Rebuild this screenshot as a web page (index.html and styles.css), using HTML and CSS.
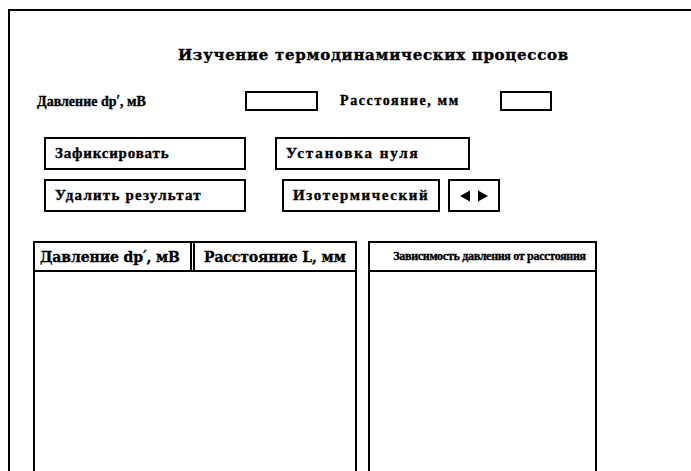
FILE: index.html
```html
<!DOCTYPE html>
<html lang="ru">
<head>
<meta charset="utf-8">
<title>Изучение термодинамических процессов</title>
<link rel="stylesheet" href="styles.css">
</head>
<body>
<div class="frame">
  <h1 class="title">Изучение термодинамических процессов</h1>

  <div class="row row-inputs">
    <span class="label label-pressure">Давление dp<span class="prime">′</span>, мВ</span>
    <span class="field field-pressure"></span>
    <span class="label label-distance">Расстояние, мм</span>
    <span class="field field-distance"></span>
  </div>

  <div class="row row-buttons">
    <button class="btn btn-fix">Зафиксировать</button>
    <button class="btn btn-zero">Установка нуля</button>
  </div>

  <div class="row row-buttons">
    <button class="btn btn-delete">Удалить результат</button>
    <button class="btn btn-mode">Изотермический</button>
    <button class="btn btn-spin" aria-label="Переключить режим">
      <svg width="30" height="12" viewBox="0 0 30 12">
        <polygon points="1,6 11,0.5 11,11.5" fill="#000"/>
        <polygon points="29,6 19,0.5 19,11.5" fill="#000"/>
      </svg>
    </button>
  </div>

  <div class="panels">
    <div class="results">
      <div class="results-head">
        <div class="th th-pressure">Давление dp<span class="prime">′</span>, мВ</div>
        <div class="th th-distance">Расстояние L, мм</div>
      </div>
    </div>
    <div class="chart">
      <div class="chart-head">Зависимость давления от расстояния</div>
    </div>
  </div>
</div>
</body>
</html>
```

FILE: styles.css
```css
html, body {
  margin: 0;
  padding: 0;
  overflow: hidden;
  background: #fff;
  color: #000;
}

body {
  font-family: "Liberation Serif", "Times New Roman", serif;
  font-weight: bold;
  -webkit-text-stroke: 0.35px #000;
}

/* outer window frame: only top and left edges fall inside the view */
.frame {
  margin: 9px 0 0 8px;
  border-left: 2px solid #000;
  border-top: 2px solid #000;
  height: 520px;
  display: flex;
  flex-direction: column;
}

.title {
  margin: 36px 0 0 168px;
  font-family: "DejaVu Serif", serif;
  font-size: 15px;
  line-height: 16px;
  font-weight: bold;
  letter-spacing: 0.7px;
}

.row {
  display: flex;
  align-items: center;
}

.row-inputs {
  margin-top: 28px;
  height: 20px;
}

.label {
  font-size: 14px;
  line-height: 16px;
  white-space: nowrap;
}

.prime {
  font-size: 1.15em;
  font-weight: normal;
}

.label-pressure {
  margin-left: 27px;
  width: 208px;
}

.label-distance {
  margin-left: 22px;
  width: 160px;
  letter-spacing: 1.6px;
}

.field {
  box-sizing: border-box;
  height: 20px;
  border: 2px solid #000;
}

.field-pressure { width: 73px; }
.field-distance { width: 52px; }

.row-buttons {
  height: 33px;
  margin-top: 9px;
}

.row-inputs + .row-buttons {
  margin-top: 26px;
}

.btn {
  box-sizing: border-box;
  height: 33px;
  margin: 0;
  padding: 0 0 0 9px;
  border: 2px solid #000;
  border-radius: 0;
  background: #fff;
  color: #000;
  font-family: "Liberation Serif", "Times New Roman", serif;
  font-weight: bold;
  font-size: 15px;
  letter-spacing: 0.8px;
  text-align: left;
  white-space: nowrap;
  -webkit-text-stroke: 0.35px #000;
}

.btn-fix, .btn-delete {
  margin-left: 34px;
  width: 202px;
}

.btn-delete {
  letter-spacing: 1.2px;
}

.btn-zero {
  margin-left: 29px;
  width: 195px;
  letter-spacing: 1.9px;
}

.btn-mode {
  margin-left: 36px;
  width: 158px;
  letter-spacing: 1.6px;
}

.btn-spin {
  margin-left: 8px;
  width: 52px;
  padding: 0;
  display: flex;
  align-items: center;
  justify-content: center;
}

.panels {
  display: flex;
  margin-top: 29px;
  flex: 1;
}

.results, .chart {
  box-sizing: border-box;
  border: 2px solid #000;
  border-bottom: none;
}

.results {
  margin-left: 23px;
  width: 324px;
}

.chart {
  margin-left: 11px;
  width: 229px;
}

.results-head, .chart-head {
  box-sizing: border-box;
  height: 29px;
  border-bottom: 2px solid #000;
}

.results-head {
  display: flex;
}

.th {
  display: flex;
  align-items: center;
  font-family: "DejaVu Serif", serif;
  font-size: 14px;
  letter-spacing: -0.1px;
  white-space: nowrap;
}

.th-pressure {
  width: 160px;
  padding-left: 5px;
  box-sizing: border-box;
  border-right: 5px double #000;
}

.th-distance {
  flex: 1;
  padding-left: 9px;
}

.chart-head {
  display: flex;
  align-items: center;
  justify-content: center;
  padding-left: 14px;
  font-size: 12px;
  letter-spacing: -0.3px;
  white-space: nowrap;
}
```
